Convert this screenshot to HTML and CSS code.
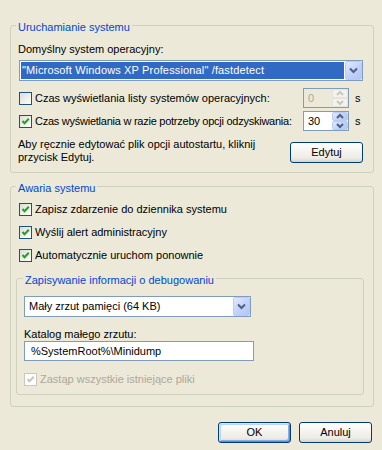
FILE: index.html
```html
<!DOCTYPE html>
<html lang="pl">
<head>
<meta charset="utf-8">
<title>Uruchamianie i odzyskiwanie</title>
<link rel="stylesheet" href="styles.css">
</head>
<body>
<div class="dialog">
  <section class="group g-startup">
    <div class="legend">Uruchamianie systemu</div>
    <div class="caption">Domyślny system operacyjny:</div>
    <div class="combo combo-os">
      <span class="combo-text selected">"Microsoft Windows XP Professional" /fastdetect</span>
      <span class="combo-btn"><svg viewBox="0 0 17 19" width="17" height="19"><polyline points="5,7.5 8.5,11 12,7.5"/></svg></span>
    </div>
    <div class="opt timer">
      <span class="check"></span>
      <span class="opt-label timer-label">Czas wyświetlania listy systemów operacyjnych:</span>
      <span class="spin disabled">
        <span class="spin-val">0</span>
        <span class="spin-btns">
          <span class="spin-btn"><svg viewBox="0 0 16 9" width="16" height="9"><polyline points="5,6 8,3 11,6"/></svg></span>
          <span class="spin-btn"><svg viewBox="0 0 16 9" width="16" height="9"><polyline points="5,3 8,6 11,3"/></svg></span>
        </span>
      </span>
      <span class="unit">s</span>
    </div>
    <div class="opt timer timer-2">
      <span class="check checked"><svg viewBox="0 0 11 11" width="11" height="11"><polyline points="2.5,5 4.5,7.2 8.8,2.8"/></svg></span>
      <span class="opt-label timer-label tight">Czas wyświetlania w razie potrzeby opcji odzyskiwania:</span>
      <span class="spin">
        <span class="spin-val">30</span>
        <span class="spin-btns">
          <span class="spin-btn"><svg viewBox="0 0 16 9" width="16" height="9"><polyline points="5,6 8,3 11,6"/></svg></span>
          <span class="spin-btn"><svg viewBox="0 0 16 9" width="16" height="9"><polyline points="5,3 8,6 11,3"/></svg></span>
        </span>
      </span>
      <span class="unit">s</span>
    </div>
    <div class="note-row">
      <p class="note">Aby ręcznie edytować plik opcji autostartu, kliknij<br>przycisk Edytuj.</p>
      <button class="btn btn-edit" type="button">Edytuj</button>
    </div>
  </section>

  <section class="group g-crash">
    <div class="legend">Awaria systemu</div>
    <div class="opt crash-opt first">
      <span class="check checked"><svg viewBox="0 0 11 11" width="11" height="11"><polyline points="2.5,5 4.5,7.2 8.8,2.8"/></svg></span>
      <span class="opt-label">Zapisz zdarzenie do dziennika systemu</span>
    </div>
    <div class="opt crash-opt">
      <span class="check checked"><svg viewBox="0 0 11 11" width="11" height="11"><polyline points="2.5,5 4.5,7.2 8.8,2.8"/></svg></span>
      <span class="opt-label">Wyślij alert administracyjny</span>
    </div>
    <div class="opt crash-opt">
      <span class="check checked"><svg viewBox="0 0 11 11" width="11" height="11"><polyline points="2.5,5 4.5,7.2 8.8,2.8"/></svg></span>
      <span class="opt-label">Automatycznie uruchom ponownie</span>
    </div>

    <section class="group g-debug">
      <div class="legend">Zapisywanie informacji o debugowaniu</div>
      <div class="combo combo-dump">
        <span class="combo-text">Mały zrzut pamięci (64 KB)</span>
        <span class="combo-btn"><svg viewBox="0 0 17 19" width="17" height="19"><polyline points="5,7.5 8.5,11 12,7.5"/></svg></span>
      </div>
      <div class="caption dir-caption">Katalog małego zrzutu:</div>
      <div class="field">%SystemRoot%\Minidump</div>
      <div class="opt overwrite">
        <span class="check checked disabled"><svg viewBox="0 0 11 11" width="11" height="11"><polyline points="2.5,5 4.5,7.2 8.8,2.8"/></svg></span>
        <span class="opt-label">Zastąp wszystkie istniejące pliki</span>
      </div>
    </section>
  </section>

  <div class="buttons">
    <button class="btn btn-default" type="button">OK</button>
    <button class="btn" type="button">Anuluj</button>
  </div>
</div>
</body>
</html>
```

FILE: styles.css
```css
* { box-sizing: border-box; }
html, body { margin: 0; padding: 0; }
body {
  width: 382px;
  height: 450px;
  overflow: hidden;
  background: #ECE9D8;
  font-family: "Liberation Sans", Arial, sans-serif;
  font-size: 11px;
  line-height: 13px;
  color: #000;
}
.dialog {
  height: 450px;
  padding: 25px 8px 0 10px;
}

/* group boxes */
.group {
  border: 1px solid #D0D0BF;
  border-radius: 3px;
}
.legend {
  display: table;
  margin-top: -5px;
  padding: 0 2px;
  background: #ECE9D8;
  color: #0046D5;
  white-space: nowrap;
}
.g-startup {
  height: 148px;
  padding: 0 10px 0 7px;
}
.g-startup .legend { margin-left: -2px; }
.g-crash {
  height: 221px;
  margin-top: 13px;
  padding: 0 9px 0 5px;
}
.g-debug {
  height: 117px;
  margin-top: 16px;
  padding: 0 7px;
}
.g-debug .legend { margin-left: -1px; }

.caption { margin-top: 9px; white-space: nowrap; }
.dir-caption { margin-top: 11px; }

/* combo boxes */
.combo {
  display: flex;
  height: 21px;
  border: 1px solid #7F9DB9;
  background: #FFFFFF;
}
.combo-os { width: 344px; margin: 4px 0 0 1px; }
.combo-dump { width: 227px; margin-top: 9px; }
.combo-text {
  flex: 1;
  margin: 1px;
  padding-left: 3px;
  line-height: 17px;
  white-space: nowrap;
  overflow: hidden;
}
.combo-text.selected {
  background: #316AC5;
  color: #FFFFFF;
  padding-left: 1px;
  letter-spacing: 0.15px;
}
.combo-btn {
  flex: none;
  width: 17px;
  height: 19px;
  border: 1px solid #BACCF4;
  border-radius: 2px;
  background: linear-gradient(135deg, #E2EAFE 0%, #C3D3FA 50%, #B2C6F4 100%);
  display: flex;
  align-items: center;
  justify-content: center;
}
.combo-btn svg {
  display: block;
  margin: -1px;
  fill: none;
  stroke: #4D6185;
  stroke-width: 2;
}

/* options */
.opt {
  display: flex;
  align-items: center;
}
.check {
  flex: none;
  width: 13px;
  height: 13px;
  border: 1px solid #1C5180;
  background: linear-gradient(135deg, #DCDCD7 0%, #F4F4F1 70%, #FFFFFF 100%);
}
.check svg {
  display: block;
  fill: none;
  stroke: #21A121;
  stroke-width: 2;
}
.check.disabled {
  border-color: #CAC8BB;
  background: #FFFFFF;
}
.check.disabled svg { stroke: #CAC8BB; }
.opt-label {
  margin-left: 3px;
  padding-top: 1px;
  white-space: nowrap;
}

.timer {
  height: 20px;
  margin: 7px 0 0 1px;
}
.timer-2 { margin-top: 3px; }
.timer-label { flex: none; width: 268px; }
.timer-label.tight { letter-spacing: -0.25px; }

.spin {
  flex: none;
  display: flex;
  width: 46px;
  height: 20px;
  border: 1px solid #7F9DB9;
  background: #FFFFFF;
}
.spin-val {
  flex: 1;
  padding-left: 4px;
  line-height: 18px;
}
.spin-btns {
  flex: none;
  display: flex;
  flex-direction: column;
  width: 16px;
}
.spin-btn {
  height: 9px;
  border: 1px solid #BACCF4;
  border-radius: 2px;
  background: linear-gradient(135deg, #E2EAFE 0%, #C3D3FA 50%, #B2C6F4 100%);
  overflow: hidden;
}
.spin-btn svg {
  display: block;
  margin: -1px;
  fill: none;
  stroke: #4D6185;
  stroke-width: 2;
}
.spin.disabled { background: #ECE9D8; }
.spin.disabled .spin-val { color: #ACA899; }
.spin.disabled .spin-btn {
  border-color: #E6E4DA;
  background: #F3F2EC;
}
.spin.disabled .spin-btn svg { stroke: #CAC8BB; }
.unit { margin-left: 6px; padding-top: 1px; }

.note-row {
  display: flex;
  align-items: flex-start;
  margin-top: 7px;
}
.note {
  margin: 0;
  white-space: nowrap;
}

/* crash group */
.crash-opt { margin: 10px 0 0 3px; }
.crash-opt.first { margin-top: 8px; }
.crash-opt .opt-label, .overwrite .opt-label { padding-top: 0; }

.field {
  width: 230px;
  height: 20px;
  border: 1px solid #7F9DB9;
  background: #FFFFFF;
  padding-left: 6px;
  line-height: 18px;
  white-space: nowrap;
}
.overwrite { margin-top: 12px; }
.overwrite .opt-label { color: #ACA899; }

/* push buttons */
.btn {
  width: 73px;
  height: 21px;
  padding: 0;
  border: 1px solid #003C74;
  border-radius: 3px;
  background: linear-gradient(#FFFFFF 0%, #F7F6F2 35%, #ECEBE5 80%, #D8D3C8 100%);
  font: inherit;
  color: #000;
  line-height: 13px;
  flex: none;
}
.btn-edit { margin: 4px 0 0 auto; }
.btn-default {
  box-shadow: inset 1px 1px 0 #CEE7FF, inset -1px -1px 0 #6982EE, inset 2px 2px 0 #BCD4F6, inset -2px -2px 0 #89ADE4;
}
.buttons {
  display: flex;
  justify-content: flex-end;
  gap: 8px;
  margin: 15px 2px 0 0;
}
```
